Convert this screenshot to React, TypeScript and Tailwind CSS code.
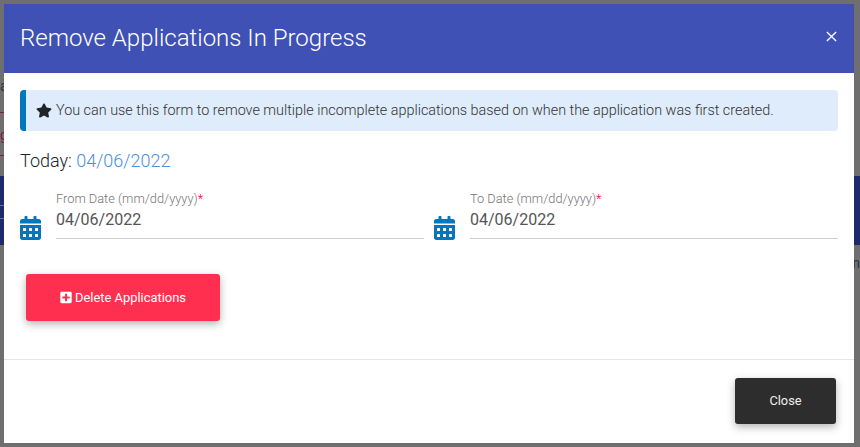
import { FaCalendarAlt, FaPlusSquare, FaStar } from "react-icons/fa";

function DateField({ label }: { label: string }) {
  return (
    <div className="flex items-start">
      <FaCalendarAlt className="mt-[26px] h-[24px] w-[21px] shrink-0 text-[#0277bd]" />
      <div className="ml-[15px] flex-1">
        <div className="h-[17px] text-[12.8px] font-light leading-[17px] text-[#757575]">
          {label}
          <span className="text-[#e4002b]">*</span>
        </div>
        <div className="h-[32px] border-b border-[#cfcfcf] pt-[1px] text-[16px] leading-[24px] text-[#555]">
          04/06/2022
        </div>
      </div>
    </div>
  );
}

export default function App() {
  return (
    <div className="relative h-[447px] w-[860px] overflow-hidden bg-[#6f6f6f] font-['Roboto',sans-serif]">
      <div className="pt-[78px] text-[14px] leading-[16px] text-[#333]">a</div>
      <div className="mt-[18px] h-px w-[10px] bg-[#7a1f3a]" />
      <div className="h-[42px] pt-[12px] text-[14px] leading-[20px] text-[#7a1f3a]">g</div>
      <div className="h-px w-[10px] bg-[#7a1f3a]" />
      <div className="mt-[20px] h-[29px] bg-[#1c2a6b]" />
      <div className="h-px bg-[#1c2a6b]">
        <div className="h-px w-[10px] bg-[#6f7390]" />
      </div>
      <div className="h-[12px] bg-[#1c2a6b]" />
      <div className="h-px bg-[#1c2a6b]">
        <div className="h-px w-[10px] bg-[#6f7390]" />
      </div>
      <div className="h-[26px] bg-[#1c2a6b]" />
      <div className="pt-[10px] text-right text-[14px] leading-[16px] text-[#333]">n</div>

      <div className="absolute left-[4px] top-[4px] flex h-[439px] w-[850px] flex-col bg-white">
        <div className="flex h-[69px] shrink-0 items-center justify-between bg-[#3f51b5] pb-[2px] pl-[16px] pr-[16px]">
          <h2 className="text-[24px] font-light leading-[32px] text-white">Remove Applications In Progress</h2>
          <svg viewBox="0 0 12 12" className="mr-[1px] mt-[-2px] h-[11px] w-[11px]" fill="none" stroke="white" strokeWidth="1.5">
            <path d="M1 1l10 10M11 1L1 11" />
          </svg>
        </div>

        <div className="flex-1 px-[16px] pt-[17px]">
          <div className="flex h-[41px] items-center rounded-[4px] border-l-[6px] border-[#0277bd] bg-[#deecfb] pl-[10px] text-[14.38px] font-light text-[#333]">
            <FaStar className="mr-[4px] h-[15px] w-[16px] text-[#212529]" />
            You can use this form to remove multiple incomplete applications based on when the application was first created.
          </div>

          <div className="mt-[18px] text-[18px] font-light leading-[24px] text-[#212529]">
            Today: <span className="text-[#4a90d9]">04/06/2022</span>
          </div>

          <div className="mt-[17px] grid grid-cols-[404px_404px] gap-x-[10px]">
            <DateField label="From Date (mm/dd/yyyy)" />
            <DateField label="To Date (mm/dd/yyyy)" />
          </div>

          <button className="ml-[6px] mt-[34px] flex h-[47px] w-[194px] items-center justify-center rounded-[3px] bg-[#ff304f] text-[12.9px] text-white shadow-[0_3px_8px_rgba(0,0,0,0.3)]">
            <FaPlusSquare className="mr-[3px] h-[13px] w-[12px]" />
            Delete Applications
          </button>
        </div>

        <div className="flex h-[84px] shrink-0 justify-end border-t border-[#e5e5e5] pr-[18px] pt-[18px]">
          <button className="h-[46px] w-[101px] rounded-[3px] bg-[#2d2d2d] text-[12.8px] text-[#eee] shadow-[0_3px_8px_rgba(0,0,0,0.3)]">
            Close
          </button>
        </div>
      </div>
    </div>
  );
}
